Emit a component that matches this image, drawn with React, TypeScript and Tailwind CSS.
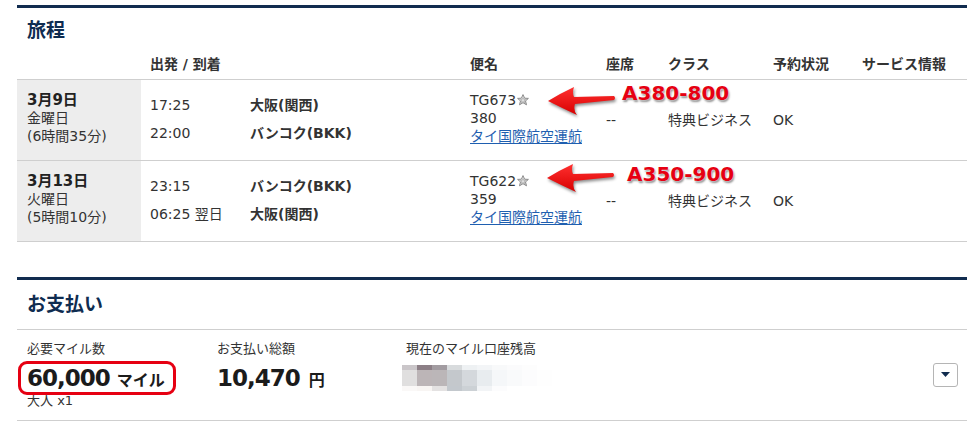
// 予約確認ページ: 旅程 + お支払い

interface Segment {
  date: string;
  dow: string;
  dur: string;
  dep: string;
  depPlace: string;
  arr: string;
  arrPlace: string;
  flight: string;
  equip: string;
}

const segments: Segment[] = [
  {
    date: '3月9日',
    dow: '金曜日',
    dur: '(6時間35分)',
    dep: '17:25',
    depPlace: '大阪(関西)',
    arr: '22:00',
    arrPlace: 'バンコク(BKK)',
    flight: 'TG673',
    equip: '380',
  },
  {
    date: '3月13日',
    dow: '火曜日',
    dur: '(5時間10分)',
    dep: '23:15',
    depPlace: 'バンコク(BKK)',
    arr: '06:25 翌日',
    arrPlace: '大阪(関西)',
    flight: 'TG622',
    equip: '359',
  },
];

// ぼかし画像 (口座残高) のピクセル
const blurRows: string[][] = [
  ['bg-[#cac6c9]', 'bg-[#8c7f86]', 'bg-[#a29ca1]', 'bg-[#d8dbdd]', 'bg-[#eef1f3]', 'bg-[#f3f5f7]', 'bg-[#f8f9fa]', 'bg-[#fbfbfc]', 'bg-[#fdfdfd]', 'bg-white'],
  ['bg-[#e0dfdf]', 'bg-[#bcb5b7]', 'bg-[#bbb6b8]', 'bg-[#c4c8cc]', 'bg-[#d4d8dc]', 'bg-[#e8ecef]', 'bg-[#f5f7f9]', 'bg-[#f9fafb]', 'bg-[#fcfcfd]', 'bg-[#fefefe]'],
  ['bg-[#faf8f7]', 'bg-[#f8f5f3]', 'bg-[#e4e2e2]', 'bg-[#c3c8cd]', 'bg-[#ccd1d5]', 'bg-[#f2f4f6]', 'bg-[#fcfcfd]', 'bg-white', 'bg-white', 'bg-white'],
];
const blurHeights = ['h-[5px]', 'h-[16px]', 'h-[5px]'];

function Star() {
  return (
    <svg width="12" height="12" viewBox="0 0 12 12" className="inline-block align-[-1px] ml-[1px]">
      <defs>
        <linearGradient id="sg" x1="0" y1="0" x2="1" y2="1">
          <stop offset="0" stopColor="#ffffff" />
          <stop offset="1" stopColor="#c8c8c8" />
        </linearGradient>
      </defs>
      <polygon
        points="6,0.6 7.6,4.2 11.4,4.4 8.5,6.9 9.5,10.8 6,8.7 2.5,10.8 3.5,6.9 0.6,4.4 4.4,4.2"
        fill="url(#sg)"
        stroke="#8a8a8a"
        strokeWidth="1"
        strokeLinejoin="round"
      />
      <polygon points="6,3.6 6.8,5.4 8.6,5.6 7.2,6.8 7.7,8.6 6,7.6 4.3,8.6 4.8,6.8 3.4,5.6 5.2,5.4" fill="#e2e2e2" stroke="#a0a0a0" strokeWidth="0.6" />
    </svg>
  );
}

function Arrow({ className }: { className: string }) {
  return (
    <svg width="74" height="36" viewBox="0 0 74 36" className={className}>
      <defs>
        <linearGradient id="ag" x1="0" y1="0" x2="0" y2="1">
          <stop offset="0" stopColor="#ff3030" />
          <stop offset="1" stopColor="#d80000" />
        </linearGradient>
      </defs>
      <path
        d="M3,17 Q16,9 29,3 Q27,9 29,13 L69,12 Q71,14 69,16 L30,20 Q28,26 32,31 Q17,24 3,17 Z"
        fill="url(#ag)"
      />
    </svg>
  );
}

function SegmentRow({ s }: { s: Segment }) {
  return (
    <div className="grid grid-cols-[124px_109px_220px_136px_62px_105px_89px_105px] h-[81px] border-b border-[#cfcfcf] text-[14px] text-[#333]">
      <div className="bg-[#ededed] pl-[10px] pt-[11px]">
        <div className="text-[15px] font-bold leading-[18px] text-[#222]">{s.date}</div>
        <div className="leading-[18px]">{s.dow}</div>
        <div className="leading-[18px]">{s.dur}</div>
      </div>
      <div className="pl-[9px] pt-[11px] leading-[28px]">
        <div>{s.dep}</div>
        <div>{s.arr}</div>
      </div>
      <div className="pt-[11px] leading-[28px] font-bold">
        <div>{s.depPlace}</div>
        <div>{s.arrPlace}</div>
      </div>
      <div className="pt-[11px] leading-[18px]">
        <div>
          {s.flight}
          <Star />
        </div>
        <div>{s.equip}</div>
        <div className="text-[#1f5fb0] underline underline-offset-2">タイ国際航空運航</div>
      </div>
      <div className="self-center leading-[18px]">--</div>
      <div className="self-center leading-[18px]">特典ビジネス</div>
      <div className="self-center leading-[18px]">OK</div>
      <div />
    </div>
  );
}

export default function App() {
  return (
    <div className="relative w-[975px] h-[433px] overflow-hidden bg-white font-['DejaVu_Sans','Noto_Sans_CJK_JP',sans-serif]">
      <div className="ml-[17px] w-[950px] pt-[5px]">
        {/* 旅程 */}
        <section>
          <div className="h-[3px] bg-[#112c4f]" />
          <h2 className="pl-[10px] pt-[10px] text-[19px] font-bold leading-[24px] text-[#0f2c50]">旅程</h2>
          <div className="grid grid-cols-[124px_109px_220px_136px_62px_105px_89px_105px] h-[38px] items-end pb-[6px] border-b border-[#cfcfcf] text-[14px] font-bold leading-[18px] text-[#333]">
            <div />
            <div className="col-span-2 pl-[9px]">出発 / 到着</div>
            <div>便名</div>
            <div>座席</div>
            <div>クラス</div>
            <div>予約状況</div>
            <div>サービス情報</div>
          </div>
          {segments.map((s) => (
            <SegmentRow key={s.flight} s={s} />
          ))}
        </section>

        {/* お支払い */}
        <section className="mt-[35px]">
          <div className="h-[3px] bg-[#112c4f]" />
          <h2 className="pl-[10px] pt-[12px] pb-[13px] text-[19px] font-bold leading-[24px] text-[#0f2c50] border-b border-[#cfcfcf]">
            お支払い
          </h2>
          <div className="grid grid-cols-[190px_189px_1fr_auto] pl-[10px] pt-[10px] pb-[11px] border-b border-[#cfcfcf] text-[#333]">
            <div>
              <div className="text-[13px] leading-[18px]">必要マイル数</div>
              <div className="relative mt-[4px] leading-[32px] text-[#1b1b1b] whitespace-nowrap">
                <span className="text-[23px] font-bold tracking-[-1px]">60,000</span>
                <span className="ml-[7px] text-[16px] font-bold">マイル</span>
                <span className="absolute left-[-9px] top-[-1px] w-[158px] h-[34px] rounded-[9px] border-[3px] border-[#e60012] z-10" />
              </div>
              <div className="-mt-[4px] text-[13px] leading-[16px]">大人 x1</div>
            </div>
            <div>
              <div className="text-[13px] leading-[18px]">お支払い総額</div>
              <div className="mt-[4px] leading-[32px] text-[#1b1b1b] whitespace-nowrap">
                <span className="text-[23px] font-bold tracking-[-1px]">10,470</span>
                <span className="ml-[9px] text-[16px] font-bold">円</span>
              </div>
            </div>
            <div>
              <div className="text-[13px] leading-[18px]">現在のマイル口座残高</div>
              <div className="-ml-[4px] mt-[7px] flex flex-col w-[150px]">
                {blurRows.map((row, i) => (
                  <div key={i} className={`flex ${blurHeights[i]}`}>
                    {row.map((c, j) => (
                      <div key={j} className={`w-[15px] ${c}`} />
                    ))}
                  </div>
                ))}
              </div>
            </div>
            <div className="self-center mr-[9px]">
              <button className="flex items-center justify-center w-[25px] h-[24px] rounded-[3px] border border-[#b5b5b5] bg-white">
                <svg width="9" height="5" viewBox="0 0 9 5">
                  <polygon points="0,0 9,0 4.5,5" fill="#112c4f" />
                </svg>
              </button>
            </div>
          </div>
        </section>
      </div>

      {/* 注釈 (機材) */}
      <Arrow className="absolute left-[545px] top-[84px] drop-shadow-[1px_2px_1.5px_rgba(0,0,0,0.45)]" />
      <div className="absolute left-[622px] top-[81px] text-[20px] font-bold leading-[24px] text-[#e60012] [text-shadow:0_0_2px_#fff,1px_2px_2px_rgba(0,0,0,0.45)]">
        A380-800
      </div>
      <Arrow className="absolute left-[544px] top-[161px] drop-shadow-[1px_2px_1.5px_rgba(0,0,0,0.45)]" />
      <div className="absolute left-[627px] top-[162px] text-[20px] font-bold leading-[24px] text-[#e60012] [text-shadow:0_0_2px_#fff,1px_2px_2px_rgba(0,0,0,0.45)]">
        A350-900
      </div>
    </div>
  );
}
